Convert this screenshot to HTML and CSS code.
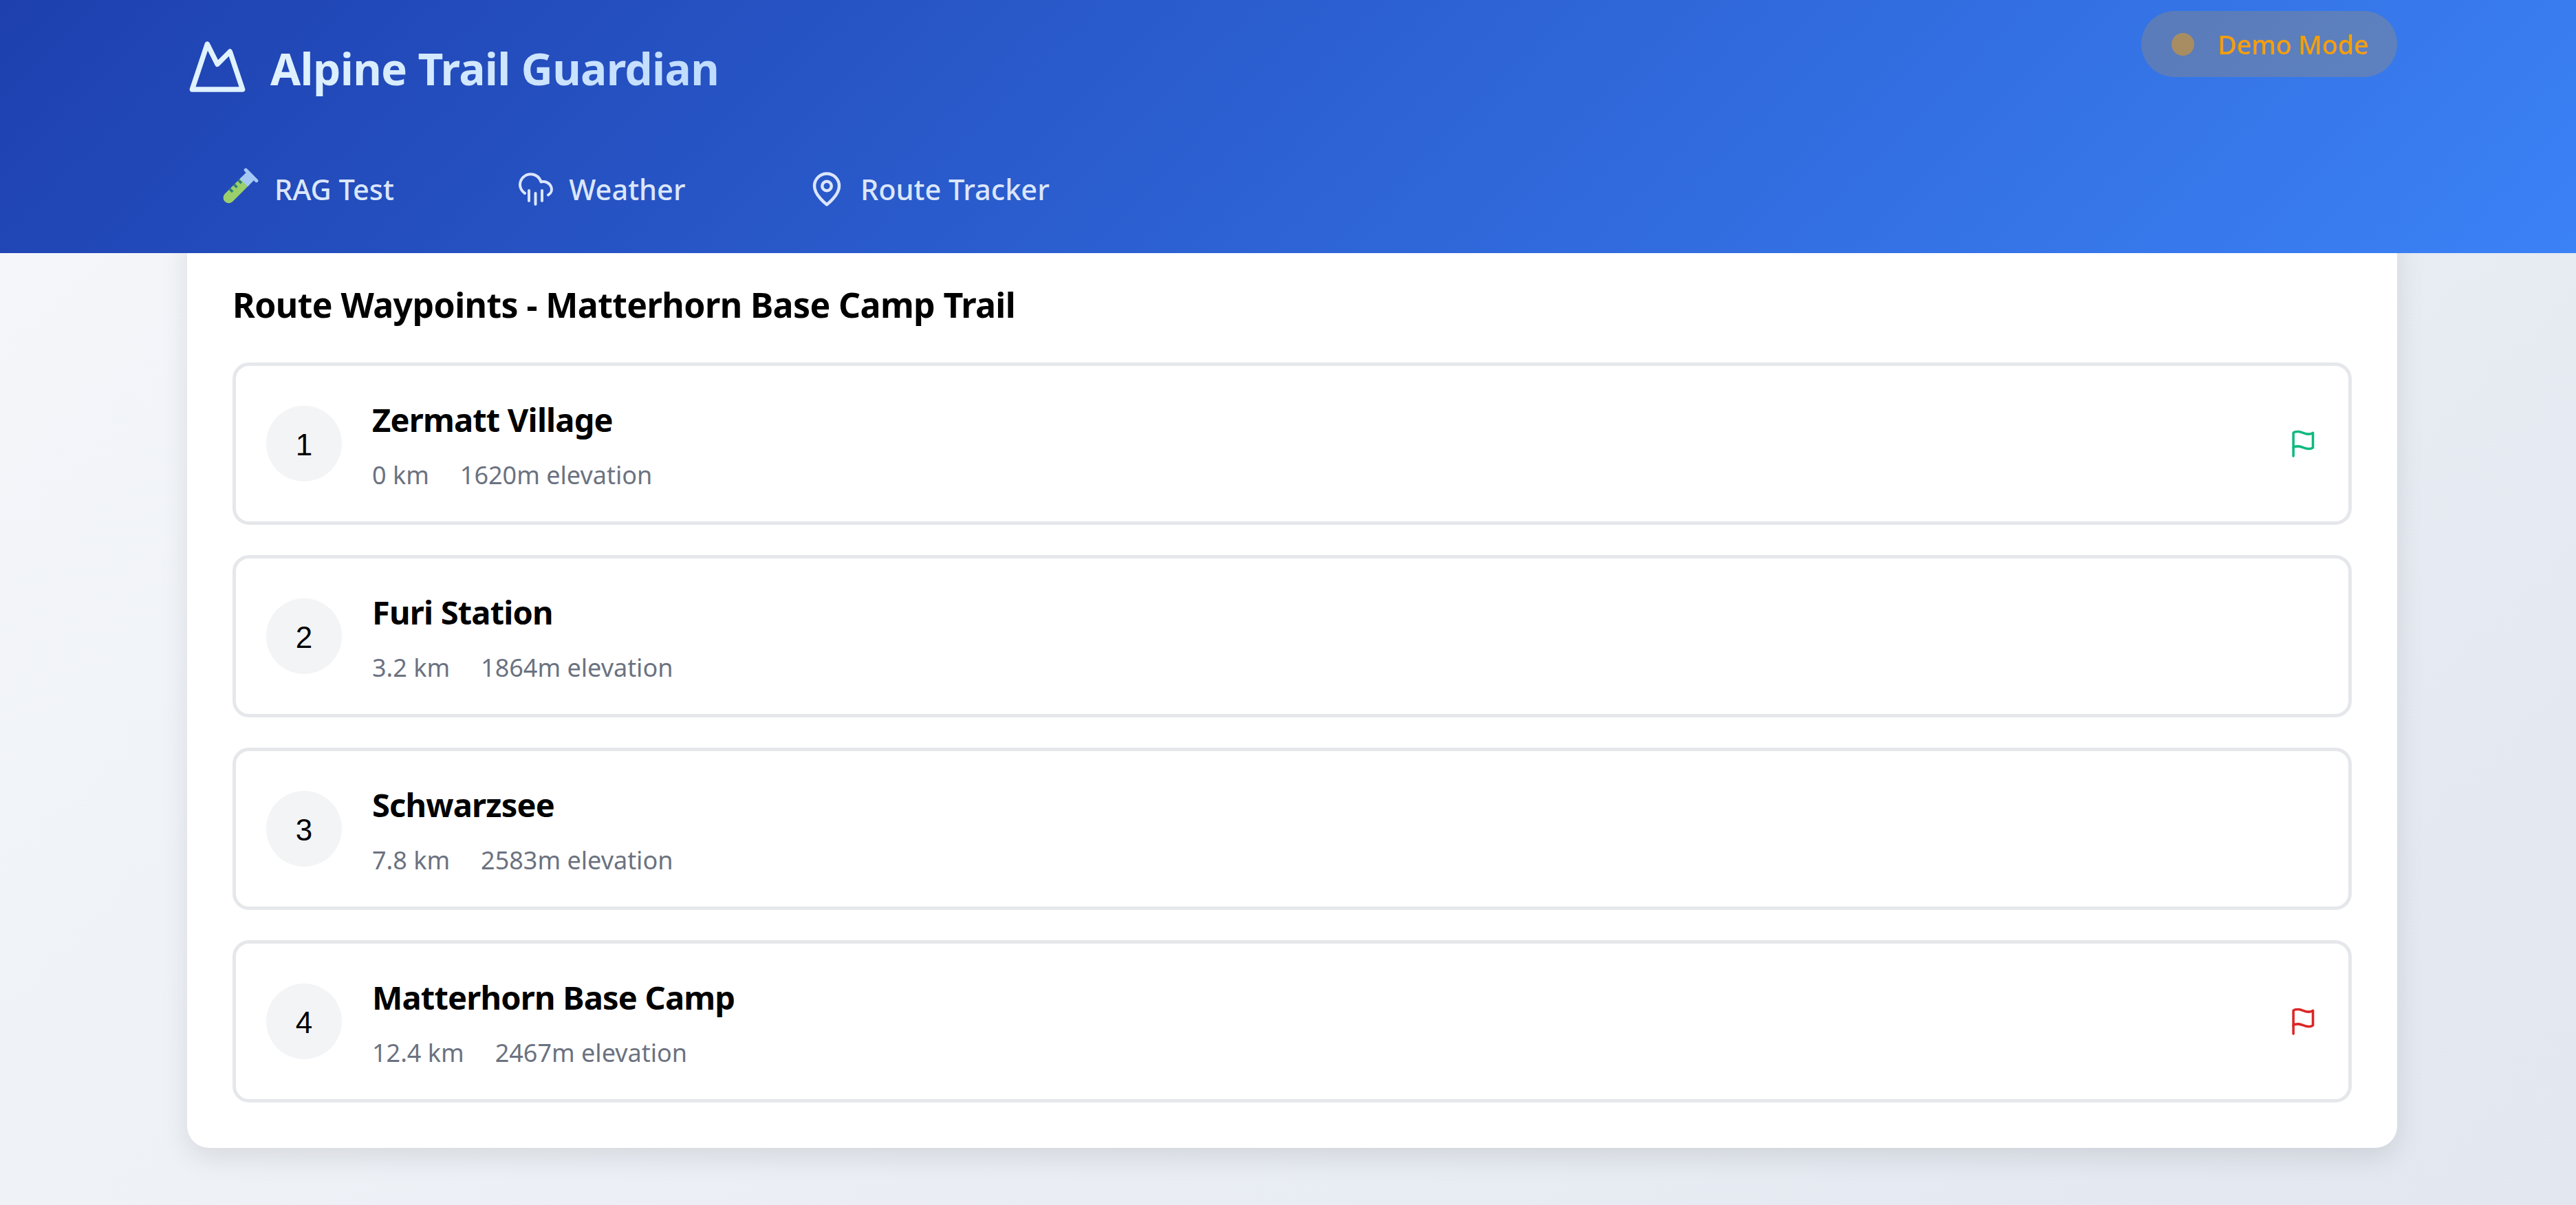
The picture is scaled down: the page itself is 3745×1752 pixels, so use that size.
FILE: index.html
```html
<!DOCTYPE html>
<html lang="en">
<head>
<meta charset="utf-8">
<title>Alpine Trail Guardian</title>
<link rel="stylesheet" href="styles.css">
</head>
<body>
<header class="header">
  <div class="header-inner">
    <div class="top-row">
      <div class="brand">
        <svg class="brand-icon" viewBox="0 0 24 24"><path d="m8 3 4 8 5-5 5 15H2L8 3z"/></svg>
        <h1 class="brand-title">Alpine Trail Guardian</h1>
      </div>
      <div class="mode-pill"><span class="mode-dot"></span><span class="mode-text">Demo Mode</span></div>
    </div>
    <nav class="nav">
      <a class="nav-item">
        <svg class="nav-icon tube" viewBox="0 0 54 54">
          <g transform="translate(-4 -1) rotate(45 27 27)">
            <path class="tube-liquid" d="M19 12h16v34a8 8 0 0 1-16 0z"/>
            <path class="tube-glass" d="M19 0h16v15H19z"/>
            <path class="tube-lip" d="M16 0h22"/>
            <path class="tube-mark" d="M19 18h6M19 27h6M19 36h6"/>
          </g>
        </svg>
        <span>RAG Test</span>
      </a>
      <a class="nav-item">
        <svg class="nav-icon line" viewBox="0 0 54 54" stroke-width="4">
          <path d="M12 33C5 28 3.500 20.500 6.500 14 10 7 18 3.500 25.500 6c5 1.700 8.500 5.500 10 10.500 5.500-1.500 12 1 14.500 6.500 2 5 .5 10-4 12.500"/>
          <path d="M18 29v15M27.500 33v16M37 29v15"/>
        </svg>
        <span>Weather</span>
      </a>
      <a class="nav-item">
        <svg class="nav-icon line" viewBox="0 0 24 24" stroke-width="2">
          <path d="M20 10c0 6-8 12-8 12s-8-6-8-12a8 8 0 0 1 16 0Z"/>
          <circle cx="12" cy="10" r="3"/>
        </svg>
        <span>Route Tracker</span>
      </a>
    </nav>
  </div>
</header>
<main class="main">
  <section class="card">
    <h2 class="card-title">Route Waypoints - Matterhorn Base Camp Trail</h2>
    <ol class="waypoints">
      <li class="waypoint">
        <div class="num">1</div>
        <div class="info">
          <div class="name">Zermatt Village</div>
          <div class="meta"><span>0 km</span><span>1620m elevation</span></div>
        </div>
        <svg class="flag start" viewBox="0 0 24 24"><path d="M4 15s1-1 4-1 5 2 8 2 4-1 4-1V3s-1 1-4 1-5-2-8-2-4 1-4 1z"/><path d="M4 22v-7"/></svg>
      </li>
      <li class="waypoint">
        <div class="num">2</div>
        <div class="info">
          <div class="name">Furi Station</div>
          <div class="meta"><span>3.2 km</span><span>1864m elevation</span></div>
        </div>
      </li>
      <li class="waypoint">
        <div class="num">3</div>
        <div class="info">
          <div class="name">Schwarzsee</div>
          <div class="meta"><span>7.8 km</span><span>2583m elevation</span></div>
        </div>
      </li>
      <li class="waypoint">
        <div class="num">4</div>
        <div class="info">
          <div class="name">Matterhorn Base Camp</div>
          <div class="meta"><span>12.4 km</span><span>2467m elevation</span></div>
        </div>
        <svg class="flag end" viewBox="0 0 24 24"><path d="M4 15s1-1 4-1 5 2 8 2 4-1 4-1V3s-1 1-4 1-5-2-8-2-4 1-4 1z"/><path d="M4 22v-7"/></svg>
      </li>
    </ol>
  </section>
</main>
</body>
</html>
```
FILE: styles.css
```css
* { box-sizing: border-box; }
html, body { margin: 0; padding: 0; }
body {
  height: 1752px;
  overflow: hidden;
  background: linear-gradient(135deg, #f5f7fa 0%, #e2e7f0 100%);
  font-family: "Noto Sans", "Open Sans", sans-serif;
  color: #000;
}
.header {
  position: relative;
  z-index: 2;
  height: 368px;
  background: linear-gradient(135deg, #1e40af 0%, #3b82f6 100%);
}
.header-inner { margin: 0 260px 0 272px; padding-top: 16px; }
.top-row { display: flex; justify-content: space-between; align-items: flex-start; }
.brand { display: flex; align-items: center; gap: 33px; margin-top: 37px; height: 88px; }
.brand-icon {
  width: 88px; height: 88px;
  fill: none; stroke: #e0f2fe; stroke-width: 2; stroke-linecap: round; stroke-linejoin: round;
}
.brand-title {
  margin: 4px 0 0;
  font-size: 64px;
  letter-spacing: -0.7px;
  font-weight: 700;
  background: linear-gradient(90deg, #e0f2fe, #bfdbfe);
  -webkit-background-clip: text;
  background-clip: text;
  color: transparent;
}
.mode-pill {
  display: flex; align-items: center; gap: 34px;
  height: 96px; width: 372px; padding-left: 44px;
  border-radius: 48px;
  background: rgba(245, 158, 11, 0.2);
}
.mode-dot { width: 33px; height: 33px; border-radius: 50%; background: rgba(245, 158, 11, 0.5); }
.mode-text { font-size: 37.500px; font-weight: 500; color: #f59e0b; }
.nav { display: flex; gap: 178.500px; margin-left: 51px; margin-top: 107px; height: 54px; }
.nav-item { display: flex; align-items: center; gap: 22px; font-size: 41.500px; font-weight: 500; color: #dbe6fa; }
.nav-icon { width: 54px; height: 54px; flex: none; }
.tube { overflow: visible; }
.line { fill: none; stroke: #dbe6fa; stroke-linecap: round; stroke-linejoin: round; }
.tube-glass { fill: #a5c9f5; }
.tube-liquid { fill: #9bcf6b; }
.tube-lip { fill: none; stroke: #a5c9f5; stroke-width: 5; stroke-linecap: round; }
.tube-mark { fill: none; stroke: #2a7f7a; stroke-width: 3.500; }
.main { margin: 0 260px 0 272px; }
.card {
  margin-top: -40px;
  height: 1341px;
  padding: 83px 66px 0;
  background: #fff;
  border-radius: 32px;
  box-shadow: 0 13px 40px rgba(0, 0, 0, 0.1);
}
.card-title { margin: 0; height: 116px; font-size: 50px; letter-spacing: -0.6px; line-height: 64px; font-weight: 700; }
.waypoints { list-style: none; margin: 0; padding: 0; display: flex; flex-direction: column; gap: 44px; }
.waypoint {
  display: flex; align-items: center; gap: 44px;
  height: 236px;
  padding: 0 44px;
  border: 5px solid #e5e7eb;
  border-radius: 24px;
}
.num {
  width: 110px; height: 110px; flex: none;
  display: flex; align-items: center; justify-content: center;
  padding-top: 3px;
  border-radius: 50%;
  background: #f3f4f6;
  font-family: "Liberation Sans", sans-serif;
  font-size: 44px;
}
.info { flex: 1; display: flex; flex-direction: column; gap: 25px; padding-top: 10px; }
.name { font-size: 47px; letter-spacing: -0.8px; line-height: 62px; font-weight: 700; margin-top: -5px; }
.meta { display: flex; gap: 45px; font-size: 36px; line-height: 50px; color: #6b7280; }
.flag { width: 42.670px; height: 42.670px; flex: none; fill: none; stroke-width: 2; stroke-linecap: round; stroke-linejoin: round; }
.flag.start { stroke: #10b981; }
.flag.end { stroke: #dc2626; }
```
